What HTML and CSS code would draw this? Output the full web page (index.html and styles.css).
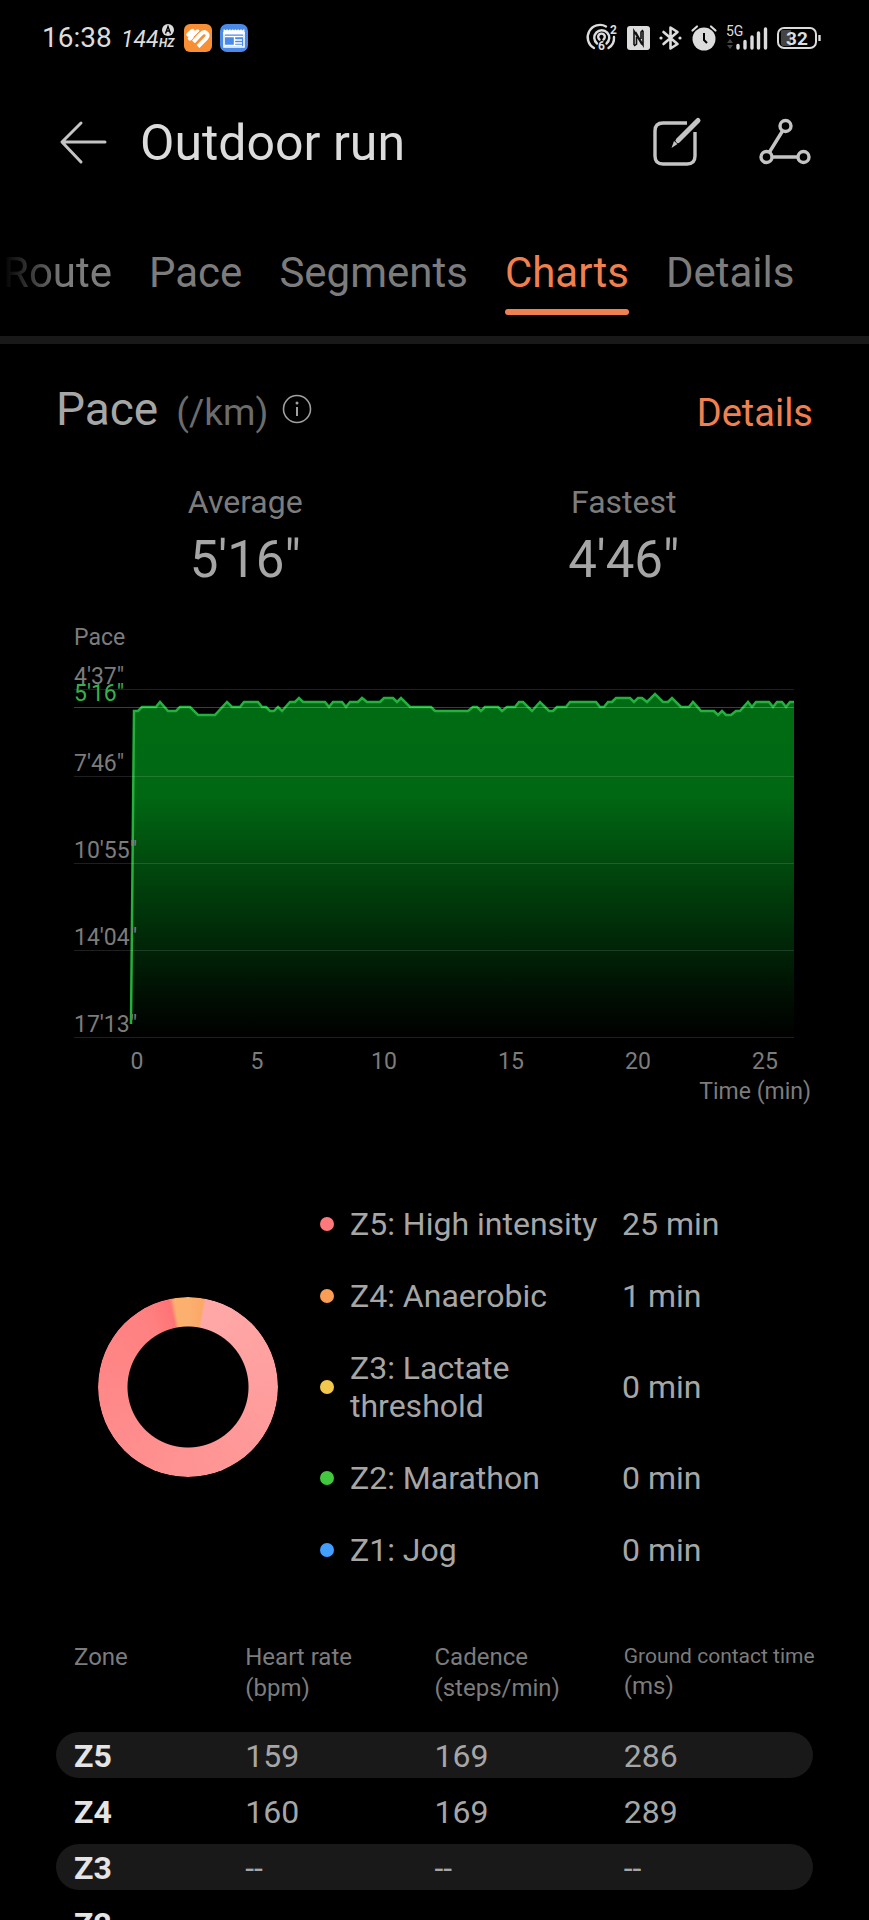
FILE: index.html
```html
<!DOCTYPE html>
<html lang="en">
<head>
    <meta charset="UTF-8">
    <meta name="viewport" content="width=device-width, initial-scale=1">
    <title>Outdoor run</title>
    <link rel="stylesheet" href="styles.css">
</head>
<body>
    <div class="status-bar">
        <div class="status-left">
            <span class="clock">16:38</span>
            <svg class="refresh-rate" width="56" height="32" viewBox="0 0 56 32">
                <text x="1" y="25" class="rate-number">144</text>
                <text x="39" y="25" class="rate-unit">HZ</text>
                <circle cx="48" cy="8" r="6" fill="#dcdcdc"/>
                <path d="M45.500 11.500L48 4.500L50.500 11.500M46.500 9H49.500" fill="none" stroke="#000" stroke-width="1.400"/>
            </svg>
            <svg width="28" height="28" viewBox="0 0 28 28">
                <rect width="28" height="28" rx="6" fill="#f98f34"/>
                <path d="M4.500 10.500L8.500 7M6 14.500L13.500 7.500" fill="none" stroke="#fff" stroke-width="4.400" stroke-linecap="round"/>
                <path d="M9.500 18L17 10C20.500 6 26 10 22.500 14L14 22.500" fill="none" stroke="#fff" stroke-width="4" stroke-linejoin="round"/>
                <path d="M9.500 13.500L16 7" fill="none" stroke="#f98f34" stroke-width="1"/>
            </svg>
            <svg width="28" height="28" viewBox="0 0 28 28">
                <rect width="28" height="28" rx="7" fill="#4a8ae8"/>
                <path d="M4 8V23H24V8" fill="none" stroke="#fff" stroke-width="1.600"/>
                <path d="M3.500 5.500H24.500V10.500H3.500Z" fill="#fff"/>
                <path d="M5 5.500H24" stroke="#4a8ae8" stroke-width="1.600" stroke-dasharray="1.200 1.600"/>
                <path d="M5 11H23V22H5Z" fill="#4a8ae8"/>
                <path d="M5 12.500H23M15 16H22M15 19H22M15 21.500H22M5 21.500H14M14.500 12V22" stroke="#fff" stroke-width="1.400"/>
            </svg>
        </div>
        <div class="status-right">
            <svg width="30" height="30" viewBox="0 0 30 30">
                <g fill="none" stroke="#dcdcdc" stroke-width="2.400" stroke-linecap="round">
                    <path d="M6 25A12 12 0 0 1 18 3.500M26 14A12 12 0 0 1 20.500 25"/>
                    <path d="M9 20.500A7.500 7.500 0 1 1 18.500 20.500"/>
                    <path d="M11.500 16.500A3.300 3.300 0 1 1 15.500 16.500"/>
                </g>
                <text x="10" y="27" class="tiny">6</text>
                <text x="22" y="11" class="tiny">2</text>
            </svg>
            <svg width="23" height="24" viewBox="0 0 23 24">
                <rect width="23" height="24" rx="3" fill="#dcdcdc"/>
                <path d="M7 19V5L15 18.500M16 5V19L8.500 6M9.500 11V18L7 20M14 13V6L16 4" fill="none" stroke="#111" stroke-width="1.600"/>
            </svg>
            <svg width="23" height="24" viewBox="0 0 23 24">
                <path d="M4.500 6L18.500 18L11.500 22.500V1.500L18.500 6L4.500 18" fill="none" stroke="#dcdcdc" stroke-width="2.600" stroke-linejoin="round" stroke-linecap="round"/>
                <circle cx="2" cy="12" r="1.600" fill="#dcdcdc"/>
                <circle cx="21" cy="12" r="1.600" fill="#dcdcdc"/>
            </svg>
            <svg width="26" height="26" viewBox="0 0 26 26">
                <circle cx="13" cy="14" r="11.500" fill="#dcdcdc"/>
                <path d="M13 8V15L16 18" fill="none" stroke="#000" stroke-width="2"/>
                <path d="M1.500 5.500L6 1.500M20 1.500L24.500 5.500" stroke="#dcdcdc" stroke-width="2.200" stroke-linecap="round"/>
            </svg>
            <svg width="42" height="30" viewBox="0 0 42 30">
                <text x="0" y="13" class="network">5G</text>
                <path d="M1 20L4 16L7 20ZM1 22L4 26L7 22Z" fill="#444"/>
                <path d="M12 25V22.500M19 25V18.500M26 25V14M32.500 25V10M39.500 25V6" stroke="#dcdcdc" stroke-width="3.400" stroke-linecap="round"/>
            </svg>
            <svg width="44" height="24" viewBox="0 0 44 24">
                <path d="M4 5Q4 4 6 4H14V20H6Q4 20 4 18Z" fill="#444"/>
                <rect x="1" y="2" width="38" height="20" rx="6" fill="none" stroke="#dcdcdc" stroke-width="2"/>
                <path d="M42.500 9V15" stroke="#dcdcdc" stroke-width="2.400"/>
                <text x="20" y="19" text-anchor="middle" class="battery-level">32</text>
            </svg>
        </div>
    </div>

    <header class="app-header">
        <button class="icon-btn" aria-label="Back">
            <svg width="48" height="44" viewBox="0 0 48 44">
                <path d="M21 2L2 21L21 41M3 21H45" fill="none" stroke="#c4c4c4" stroke-width="3" stroke-linecap="round" stroke-linejoin="round"/>
            </svg>
        </button>
        <h1>Outdoor run</h1>
        <button class="icon-btn" aria-label="Edit">
            <svg width="52" height="52" viewBox="0 0 52 52">
                <path d="M36 6H12Q4 6 4 14V39Q4 47 12 47H36Q44 47 44 39V15" fill="none" stroke="#c4c4c4" stroke-width="3.400"/>
                <path d="M47 3.500L27 23.500" stroke="#c4c4c4" stroke-width="5" stroke-linecap="round"/>
                <path d="M23 24L26.500 27L20.500 31Z" fill="#c4c4c4"/>
            </svg>
        </button>
        <button class="icon-btn" aria-label="Share">
            <svg width="52" height="52" viewBox="0 0 52 52">
                <g fill="none" stroke="#c4c4c4" stroke-width="3.400">
                    <circle cx="26.500" cy="9" r="5.500"/>
                    <circle cx="7.500" cy="40" r="5.500"/>
                    <circle cx="44.500" cy="40" r="5.500"/>
                    <path d="M23.500 14L10.500 35M13 40H39"/>
                </g>
            </svg>
        </button>
    </header>

    <nav class="tabs">
        <a href="#route">Route</a>
        <a href="#pace">Pace</a>
        <a href="#segments">Segments</a>
        <a href="#charts" class="active">Charts</a>
        <a href="#details">Details</a>
    </nav>

    <main>
        <div class="section-title">
            <h2>Pace</h2>
            <span class="unit">(/km)</span>
            <button class="icon-btn" aria-label="About pace">
                <svg width="30" height="30" viewBox="0 0 30 30">
                    <circle cx="15" cy="15" r="13.500" fill="none" stroke="#a0a0a0" stroke-width="1.600"/>
                    <path d="M15 13V22" stroke="#a0a0a0" stroke-width="2"/>
                    <circle cx="15" cy="9" r="1.500" fill="#a0a0a0"/>
                </svg>
            </button>
            <a href="#pace-details">Details</a>
        </div>

        <div class="stats">
            <div class="stat">
                <span class="stat-label">Average</span>
                <span class="stat-value">5'16"</span>
            </div>
            <div class="stat">
                <span class="stat-label">Fastest</span>
                <span class="stat-value">4'46"</span>
            </div>
        </div>

        <svg class="pace-chart" viewBox="56 620 757 490" role="img" aria-label="Pace over time">
            <defs>
                <linearGradient id="pace-fill" gradientUnits="userSpaceOnUse" x1="0" y1="690" x2="0" y2="1038">
                    <stop offset="0" stop-color="#006c14"/>
                    <stop offset="0.300" stop-color="#006813"/>
                    <stop offset="0.900" stop-color="#000c02"/>
                    <stop offset="1" stop-color="#000000"/>
                </linearGradient>
            </defs>
            <g class="axis-label">
                <text x="74" y="645">Pace</text>
                <text x="74" y="684">4'37"</text>
                <text x="74" y="771">7'46"</text>
            </g>
            <path class="area" d="M131 1038V1024L134 711H138L142 707H156L160 702L168 711H176L180 707H190L198 715H215L227 702L232 707H240L244 702H258L262 707H266L270 711H274L278 707L282 711L290 702H295L299 698L303 702H325L329 707L333 702H342L346 707L350 702H358L362 698L367 702H380L384 698H393L397 702L401 698L410 707H431L435 711H468L473 707H477L481 711L485 707H498L502 711L507 707H515L519 702H523L532 711L540 702L549 711H553L557 707H566L570 702H596L600 707H604L608 702H612L616 698H630L634 702L638 698H642L647 702L655 694L663 702H668L672 698L681 707H689L693 702L701 711H714L718 715L722 711L726 715H731L736 711H740L748 702L752 707L756 702H769L773 707L777 702H782L786 707L790 702H794V1038Z"/>
            <path class="line" d="M131 1024L134 711H138L142 707H156L160 702L168 711H176L180 707H190L198 715H215L227 702L232 707H240L244 702H258L262 707H266L270 711H274L278 707L282 711L290 702H295L299 698L303 702H325L329 707L333 702H342L346 707L350 702H358L362 698L367 702H380L384 698H393L397 702L401 698L410 707H431L435 711H468L473 707H477L481 711L485 707H498L502 711L507 707H515L519 702H523L532 711L540 702L549 711H553L557 707H566L570 702H596L600 707H604L608 702H612L616 698H630L634 702L638 698H642L647 702L655 694L663 702H668L672 698L681 707H689L693 702L701 711H714L718 715L722 711L726 715H731L736 711H740L748 702L752 707L756 702H769L773 707L777 702H782L786 707L790 702H794"/>
            <path class="grid-lines" d="M74 689.500H794M74 776.500H794M74 863.500H794M74 950.500H794M74 1037.500H794"/>
            <path class="average-line" d="M74 707.500H794"/>
            <text class="average-label" x="74" y="701">5'16"</text>
            <g class="axis-label">
                <text x="74" y="858">10'55"</text>
                <text x="74" y="945">14'04"</text>
                <text x="74" y="1032">17'13"</text>
            </g>
            <g class="axis-label" text-anchor="middle">
                <text x="137" y="1069">0</text>
                <text x="257" y="1069">5</text>
                <text x="384" y="1069">10</text>
                <text x="511" y="1069">15</text>
                <text x="638" y="1069">20</text>
                <text x="765" y="1069">25</text>
            </g>
            <text class="axis-label" x="811" y="1099" text-anchor="end">Time (min)</text>
        </svg>

        <div class="zones">
            <div class="donut"></div>
            <ul class="legend">
                <li><i class="dot z5"></i><span>Z5: High intensity</span><span>25 min</span></li>
                <li><i class="dot z4"></i><span>Z4: Anaerobic</span><span>1 min</span></li>
                <li><i class="dot z3"></i><span>Z3: Lactate threshold</span><span>0 min</span></li>
                <li><i class="dot z2"></i><span>Z2: Marathon</span><span>0 min</span></li>
                <li><i class="dot z1"></i><span>Z1: Jog</span><span>0 min</span></li>
            </ul>
        </div>

        <table class="zone-table">
            <thead>
                <tr>
                    <th scope="col">Zone</th>
                    <th scope="col">Heart rate<br>(bpm)</th>
                    <th scope="col">Cadence<br>(steps/min)</th>
                    <th scope="col"><span class="long">Ground contact time</span>(ms)</th>
                </tr>
            </thead>
            <tbody>
                <tr><th scope="row">Z5</th><td>159</td><td>169</td><td>286</td></tr>
                <tr><th scope="row">Z4</th><td>160</td><td>169</td><td>289</td></tr>
                <tr><th scope="row">Z3</th><td>--</td><td>--</td><td>--</td></tr>
                <tr><th scope="row">Z2</th><td>--</td><td>--</td><td>--</td></tr>
            </tbody>
        </table>
    </main>
</body>
</html>
```
FILE: styles.css
```css
* {
    box-sizing: border-box;
}
html {
    height: 100%;
    overflow: hidden;
    background-color: #000;
}
body {
    margin: 0;
    height: 100%;
    overflow-x: hidden;
    overflow-y: auto;
    scrollbar-width: none;
    background-color: #000;
    color: #a6a6a6;
    font-family: Roboto, "Liberation Sans", sans-serif;
}
svg {
    display: block;
    flex-shrink: 0;
    overflow: visible;
}
a {
    color: inherit;
    text-decoration: none;
}
h1, h2 {
    margin: 0;
    font-weight: 400;
}

/* Phone status bar */
.status-bar {
    display: flex;
    justify-content: space-between;
    align-items: center;
    height: 76px;
    padding: 0 48px 0 42px;
    color: #dcdcdc;
}
.status-left, .status-right {
    display: flex;
    align-items: center;
    gap: 8px;
}
.status-right {
    gap: 9px;
}
.clock {
    font-size: 28px;
    line-height: 32px;
}
.rate-number {
    font-size: 23px;
    font-style: italic;
    fill: #dcdcdc;
}
.rate-unit {
    font-size: 12px;
    font-style: italic;
    font-weight: 700;
    fill: #dcdcdc;
}
.tiny {
    font-size: 12px;
    font-weight: 700;
    fill: #dcdcdc;
}
.network {
    font-size: 14px;
    fill: #dcdcdc;
}
.battery-level {
    font-size: 19px;
    font-weight: 700;
    fill: #dcdcdc;
}

/* Header */
.icon-btn {
    padding: 0;
    border: none;
    background: none;
    cursor: pointer;
}
.app-header {
    display: flex;
    align-items: center;
    height: 134px;
    padding: 0 58px 0 60px;
    gap: 56px;
}
.app-header h1 {
    flex-grow: 1;
    margin-left: -24px;
    font-size: 50px;
    line-height: 60px;
    color: #dcdcdc;
}

/* Tabs */
.tabs {
    display: flex;
    gap: 37px;
    height: 134px;
    padding: 37px 0 0 3px;
    border-bottom: 8px solid #191919;
    font-size: 42px;
    line-height: 52px;
    color: #7c7c7c;
}
.tabs a {
    height: 68px;
    white-space: nowrap;
}
.tabs a:first-child {
    -webkit-mask-image: linear-gradient(to right, transparent, #000 60px);
    mask-image: linear-gradient(to right, transparent, #000 60px);
}
.tabs .active {
    color: #f08050;
    position: relative;
}
.tabs .active::after {
    content: "";
    position: absolute;
    left: 0;
    right: 0;
    bottom: 0;
    height: 6px;
    border-radius: 3px;
    background-color: #f08050;
}

main {
    padding: 36px 56px 0;
}

/* Pace section */
.section-title {
    display: flex;
    align-items: center;
    height: 58px;
}
.section-title h2 {
    font-size: 46px;
    line-height: 56px;
}
.section-title .unit {
    margin: 6px 14px 0 18px;
    font-size: 37px;
    color: #6c6c6c;
}
.section-title a {
    margin: 8px 0 0 auto;
    font-size: 38px;
    color: #f08050;
}
.stats {
    display: grid;
    grid-template-columns: 1fr 1fr;
    padding: 42px 0 24px;
}
.stat {
    display: flex;
    flex-direction: column;
    align-items: center;
}
.stat-label {
    font-size: 32px;
    line-height: 44px;
    color: #7c7c7c;
}
.stat-value {
    font-size: 51px;
    line-height: 72px;
}
.pace-chart {
    width: 100%;
    height: auto;
}
.axis-label {
    font-size: 23px;
    fill: #7c7c7c;
}
.average-label {
    font-size: 23px;
    fill: #35b14a;
}
.area {
    fill: url(#pace-fill);
}
.line {
    fill: none;
    stroke: #24b03c;
    stroke-width: 2.5;
}
.grid-lines {
    stroke: rgba(255, 255, 255, 0.12);
}
.average-line {
    stroke: rgba(255, 255, 255, 0.24);
}

/* Zone breakdown */
.zones {
    display: grid;
    grid-template-columns: 264px 1fr;
    align-items: center;
    padding: 78px 0 46px;
}
.donut {
    width: 180px;
    height: 180px;
    margin-left: 42px;
    border-radius: 50%;
    background: conic-gradient(#fcb070 0deg, #fba868 10deg, #ffa8a8 12deg, #ff8080 330deg, #ff7476 348deg, #fcb070 351deg);
    -webkit-mask-image: radial-gradient(circle, transparent 60px, #000 61px);
    mask-image: radial-gradient(circle, transparent 60px, #000 61px);
}
.legend {
    margin: 0;
    padding: 0;
    list-style: none;
    font-size: 32px;
    line-height: 38px;
}
.legend li {
    display: grid;
    grid-template-columns: 14px 256px 1fr;
    column-gap: 16px;
    align-items: center;
    padding: 17px 0;
}
.dot {
    width: 14px;
    height: 14px;
    border-radius: 50%;
}
.z5 { background-color: #ff787c; }
.z4 { background-color: #fa9e56; }
.z3 { background-color: #f2c84c; }
.z2 { background-color: #42c83e; }
.z1 { background-color: #429eff; }

/* Zone table */
.zone-table {
    width: 100%;
    table-layout: fixed;
    border-collapse: separate;
    border-spacing: 0 10px;
}
.zone-table th, .zone-table td {
    padding: 0;
    text-align: left;
    white-space: nowrap;
}
.zone-table th:first-child {
    padding-left: 18px;
}
.zone-table thead th {
    height: 80px;
    vertical-align: top;
    font-size: 24px;
    line-height: 31px;
    font-weight: 400;
    color: #7c7c7c;
}
.zone-table .long {
    display: block;
    font-size: 21px;
    line-height: 29px;
}
.zone-table tbody th, .zone-table tbody td {
    height: 46px;
    padding-top: 2px;
    font-size: 32px;
    line-height: 44px;
}
.zone-table tbody th {
    font-weight: 700;
    color: #e4e4e4;
}
.zone-table tbody tr:nth-child(odd) > * {
    background-color: #191919;
}
.zone-table tbody th:first-child {
    border-radius: 23px 0 0 23px;
}
.zone-table tbody td:last-child {
    border-radius: 0 23px 23px 0;
}
```
